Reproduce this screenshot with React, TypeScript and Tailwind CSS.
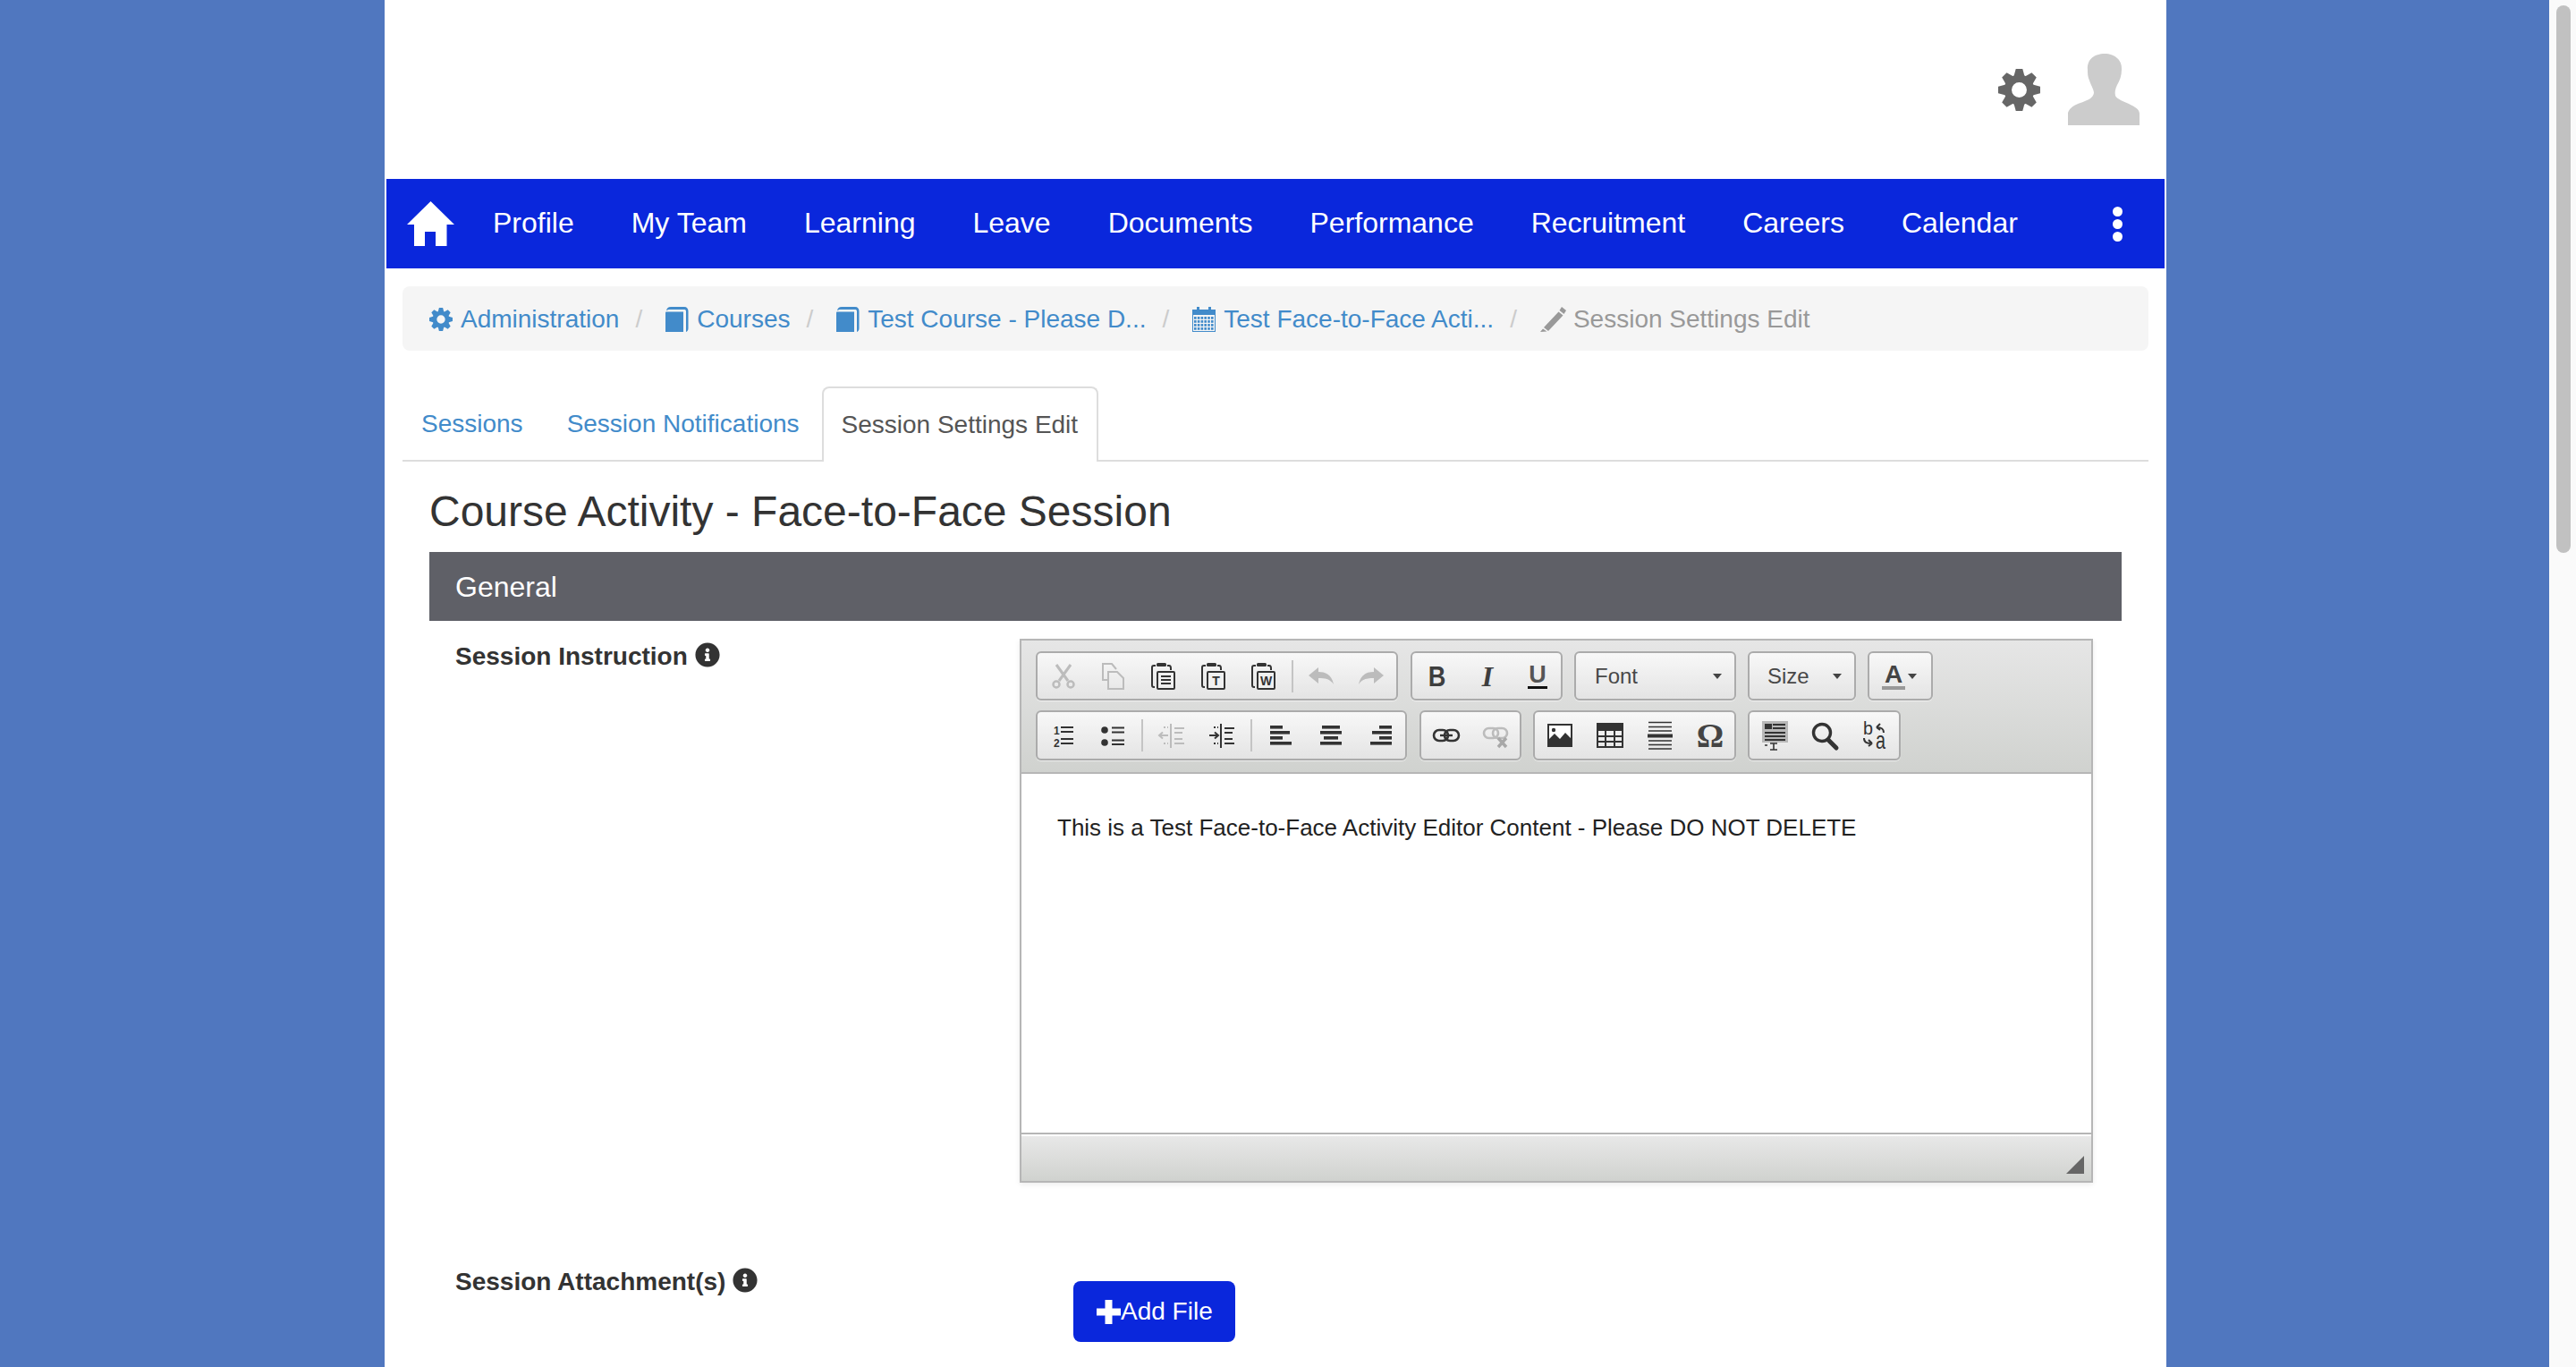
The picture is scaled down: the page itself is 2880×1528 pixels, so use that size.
import type { ReactNode } from 'react';
import { FaInfoCircle } from 'react-icons/fa';

const navItems = ['Profile', 'My Team', 'Learning', 'Leave', 'Documents', 'Performance', 'Recruitment', 'Careers', 'Calendar'];
const gearTeeth = [0, 45, 90, 135, 180, 225, 270, 315];

function GearIcon({ className }: { className: string }) {
    return (
        <svg viewBox="-25 -25 50 50" className={className} fill="currentColor">
            {gearTeeth.map((angle) => (
                <path key={angle} d="M-4 -25H4L7 -14H-7Z" transform={`rotate(${angle})`} />
            ))}
            <path fillRule="evenodd" d="M0 -18A18 18 0 1 1 0 18A18 18 0 1 1 0 -18ZM0 -9A9 9 0 1 0 0 9A9 9 0 1 0 0 -9Z" />
        </svg>
    );
}

function BookIcon() {
    return (
        <svg width="26" height="28" viewBox="0 0 26 28" className="shrink-0 fill-[#428bca]">
            <path d="M0 28V6.5C0 6 .5 5.5 1 5.5H20V28Z" />
            <path d="M1 4.5C1 2 3 0 6 0H21C24 0 25.5 2 25.5 5V24C25.5 26 24.5 27.5 23 28V5C23 3.5 22 3 21 3H5C3 3 1.5 3.5 1 4.5Z" />
        </svg>
    );
}

function CalendarIcon() {
    const cells = [];
    for (let r = 0; r < 4; r++) {
        for (let c = 0; c < 6; c++) {
            cells.push(<rect key={`${r}-${c}`} x={2 + c * 3.8} y={11 + r * 4} width="2.6" height="2.8" />);
        }
    }
    return (
        <svg width="26" height="28" viewBox="0 0 26 28" className="shrink-0 fill-[#428bca]">
            <rect x="5" y="0" width="3" height="5" />
            <rect x="18" y="0" width="3" height="5" />
            <rect x="0" y="3" width="26" height="6" />
            <rect x="0" y="9" width="1" height="19" />
            <rect x="25" y="9" width="1" height="19" />
            <rect x="0" y="27" width="26" height="1" />
            {cells}
        </svg>
    );
}

function PencilIcon() {
    return (
        <svg width="30" height="28" viewBox="0 0 30 28" className="shrink-0 fill-[#999999]">
            <path d="M24 0l5 4-2.5 4-5-4zM20.5 5.5l5 4L9 27l-5-4zM3 24.5l4.5 3L0 28z" />
        </svg>
    );
}

function Crumb({ icon, label }: { icon: ReactNode; label: string }) {
    return (
        <div className="flex items-center gap-[9px]">
            {icon}
            <a className="text-[#428bca]">{label}</a>
        </div>
    );
}

function Slash() {
    return <span className="ml-[18px] mr-[26px] text-[#cccccc]">/</span>;
}

function Icon({ children, gray }: { children: ReactNode; gray?: boolean }) {
    return (
        <svg width="32" height="32" viewBox="0 0 32 32" className={`overflow-visible ${gray ? 'text-[#bcbcbc]' : 'text-[#333333]'}`} fill="none" stroke="currentColor">
            {children}
        </svg>
    );
}

function Paste({ children }: { children: ReactNode }) {
    return (
        <Icon>
            <rect x="8" y="1" width="11" height="4" rx="1.5" fill="currentColor" stroke="none" />
            <path d="M7 4H5C3.5 4 3 5 3 6V26C3 27 3.5 28 5 28H6M20 4H22C23.5 4 24 5 24 7V9" strokeWidth="2" />
            <rect x="9" y="11" width="19" height="19" rx="1" strokeWidth="2" fill="#f0f0f0" />
            {children}
        </Icon>
    );
}

function Btn({ children }: { children: ReactNode }) {
    return <div className="flex h-full w-[56px] shrink-0 items-center justify-center">{children}</div>;
}

function Sep({ className }: { className: string }) {
    return (
        <div className={`flex h-full shrink-0 items-center justify-center ${className}`}>
            <div className="h-[36px] w-[2px] bg-[#c4c4c4]" />
        </div>
    );
}

function Group({ children, className }: { children: ReactNode; className: string }) {
    return (
        <div className={`flex shrink-0 items-center rounded-[6px] border-2 border-[#ababab] bg-linear-to-b from-[#f8f8f8] to-[#e4e4e4] shadow-[0_1px_1px_rgba(255,255,255,0.6)] ${className}`}>
            {children}
        </div>
    );
}

function Caret() {
    return <div className="h-0 w-0 border-x-[5px] border-t-[6px] border-x-transparent border-t-[#444444]" />;
}

function AlignIcon({ rows }: { rows: [number, number][] }) {
    return (
        <Icon>
            {rows.map(([x, w], i) => (
                <rect key={i} x={x} y={5 + i * 6} width={w} height="3.6" fill="currentColor" stroke="none" />
            ))}
        </Icon>
    );
}

function IndentIcon({ gray, right }: { gray?: boolean; right?: boolean }) {
    return (
        <Icon gray={gray}>
            <path d="M15 3V30" strokeWidth="2" />
            <path d="M19 8H30M19 13H28M19 20H28M19 25H30" strokeWidth="2" />
            <path d="M7 7H12M7 25H12" strokeWidth="2" strokeDasharray="2 2" />
            {right ? <path d="M2 16H11M8 12.5L12 16L8 19.5" strokeWidth="2" /> : <path d="M12 16H3M6 12.5L2 16L6 19.5" strokeWidth="2" />}
        </Icon>
    );
}

function Editor() {
    return (
        <div className="flex h-[608px] w-[1200px] flex-col border-2 border-[#b6b6b6] shadow-[0_2px_6px_rgba(0,0,0,0.08)]">
            <div className="flex flex-col gap-[11px] border-b-2 border-[#b6b6b6] bg-linear-to-b from-[#e6e6e6] to-[#d0d2cf] pb-[13px] pl-[16px] pt-[12px]">
                <div className="flex gap-[13px]">
                    <Group className="mr-[1px] h-[55px] w-[405px] pl-[1px]">
                        <Btn>
                            <Icon gray>
                                <path d="M8 3L21 21M24 3L11 21" strokeWidth="3" />
                                <circle cx="8" cy="25" r="3.5" strokeWidth="2.5" />
                                <circle cx="24" cy="25" r="3.5" strokeWidth="2.5" />
                            </Icon>
                        </Btn>
                        <Btn>
                            <Icon gray>
                                <path d="M9 20H4V2H14L19 8" strokeWidth="2" />
                                <path d="M10 11H20L27 18V30H10Z" strokeWidth="2" />
                            </Icon>
                        </Btn>
                        <Btn>
                            <Paste>
                                <path d="M13 16H24M13 20H24M13 24H24" strokeWidth="2" />
                            </Paste>
                        </Btn>
                        <Btn>
                            <Paste>
                                <text x="18.5" y="26" textAnchor="middle" fontSize="14" fontWeight="700" fontFamily="'Liberation Sans', sans-serif" fill="currentColor" stroke="none">T</text>
                            </Paste>
                        </Btn>
                        <Btn>
                            <Paste>
                                <text x="18.5" y="26" textAnchor="middle" fontSize="14" fontWeight="700" fontFamily="'Liberation Sans', sans-serif" fill="currentColor" stroke="none">W</text>
                            </Paste>
                        </Btn>
                        <Sep className="w-[8px]" />
                        <Btn>
                            <Icon gray>
                                <path d="M2 15L13 6V11C21 11 28 14 30 25C26 19 21 18 13 18V24Z" fill="currentColor" stroke="none" />
                            </Icon>
                        </Btn>
                        <Btn>
                            <Icon gray>
                                <path d="M30 15L19 6V11C11 11 4 14 2 25C6 19 11 18 19 18V24Z" fill="currentColor" stroke="none" />
                            </Icon>
                        </Btn>
                    </Group>
                    <Group className="h-[55px] w-[170px]">
                        <Btn><span className="inline-block scale-x-[0.85] font-['Liberation_Sans',sans-serif] text-[32px] font-bold leading-none text-[#3e3e3e]">B</span></Btn>
                        <Btn><span className="font-['Liberation_Serif',serif] text-[32px] font-bold italic leading-none text-[#3e3e3e]">I</span></Btn>
                        <Btn><span className="inline-block border-b-[3px] border-[#111111] px-[1px] font-['Liberation_Sans',sans-serif] text-[27px] font-bold leading-[26px] text-[#555555]">U</span></Btn>
                    </Group>
                    <Group className="h-[55px] w-[181px] justify-between pl-[21px] pr-[14px]">
                        <span className="text-[24px] text-[#484848]">Font</span>
                        <Caret />
                    </Group>
                    <Group className="h-[55px] w-[121px] justify-between pl-[20px] pr-[14px]">
                        <span className="text-[24px] text-[#484848]">Size</span>
                        <Caret />
                    </Group>
                    <Group className="h-[55px] w-[73px] pl-[14px]">
                        <span className="inline-block border-b-[4px] border-[#999999] px-[3px] text-[28px] font-bold leading-[27px] text-[#444444]">A</span>
                        <div className="ml-[3px]"><Caret /></div>
                    </Group>
                </div>
                <div className="flex gap-[13px]">
                    <Group className="mr-[1px] h-[56px] w-[415px]">
                        <Btn>
                            <Icon>
                                <text x="6" y="15" fontSize="12" fontWeight="700" fontFamily="'Liberation Sans', sans-serif" fill="currentColor" stroke="none">1</text>
                                <text x="6" y="29" fontSize="12" fontWeight="700" fontFamily="'Liberation Sans', sans-serif" fill="currentColor" stroke="none">2</text>
                                <path d="M14 7H28M14 12H28M14 20H28M14 25H28" strokeWidth="2" />
                            </Icon>
                        </Btn>
                        <Btn>
                            <Icon>
                                <circle cx="7" cy="10" r="3.8" fill="currentColor" stroke="none" />
                                <circle cx="7" cy="24" r="3.8" fill="currentColor" stroke="none" />
                                <path d="M15 7.5H29M15 12.5H29M15 21.5H29M15 26H29" strokeWidth="2" />
                            </Icon>
                        </Btn>
                        <Sep className="w-[10px]" />
                        <Btn><IndentIcon gray /></Btn>
                        <Btn><IndentIcon right /></Btn>
                        <Sep className="w-[10px]" />
                        <Btn><AlignIcon rows={[[4, 14], [4, 22], [4, 14], [4, 24]]} /></Btn>
                        <Btn><AlignIcon rows={[[6, 20], [4, 24], [8, 16], [4, 24]]} /></Btn>
                        <Btn><AlignIcon rows={[[14, 14], [6, 22], [14, 14], [4, 24]]} /></Btn>
                    </Group>
                    <Group className="h-[56px] w-[114px]">
                        <Btn>
                            <Icon>
                                <rect x="2" y="10" width="16" height="12" rx="6" strokeWidth="2.6" />
                                <rect x="14" y="10" width="16" height="12" rx="6" strokeWidth="2.6" />
                                <path d="M9 16H23" strokeWidth="2.4" />
                            </Icon>
                        </Btn>
                        <Btn>
                            <Icon gray>
                                <rect x="2" y="8" width="16" height="11" rx="5.5" strokeWidth="2.6" />
                                <rect x="12" y="8" width="16" height="11" rx="5.5" strokeWidth="2.6" />
                                <path d="M18 19L27 29M27 19L18 29" strokeWidth="3.4" className="text-[#a8a8a8]" />
                            </Icon>
                        </Btn>
                    </Group>
                    <Group className="h-[56px] w-[227px]">
                        <Btn>
                            <Icon>
                                <rect x="3" y="4" width="26" height="24" strokeWidth="2" fill="#ffffff" />
                                <circle cx="9" cy="10" r="2.2" fill="currentColor" stroke="none" />
                                <path d="M3 28V21L10 14L16 20L22 13L29 20V28Z" fill="currentColor" stroke="none" />
                            </Icon>
                        </Btn>
                        <Btn>
                            <Icon>
                                <rect x="1" y="3" width="30" height="8" fill="currentColor" stroke="none" />
                                <rect x="2" y="3" width="28" height="26" strokeWidth="2" fill="none" />
                                <path d="M11 11V29M21 11V29M2 17H30M2 23H30" strokeWidth="2" />
                            </Icon>
                        </Btn>
                        <Btn>
                            <Icon>
                                <path d="M3 1.5H29M3 6.5H29M3 11H29M3 22H29M3 26.5H29M3 31H29" strokeWidth="1.6" />
                                <rect x="2" y="14.5" width="28" height="4" fill="currentColor" stroke="none" />
                            </Icon>
                        </Btn>
                        <Btn><span className="font-['Liberation_Serif',serif] text-[38px] font-bold leading-none text-[#444444]">Ω</span></Btn>
                    </Group>
                    <Group className="h-[56px] w-[171px]">
                        <Btn>
                            <Icon>
                                <rect x="2" y="0" width="29" height="24" fill="#b8b8b8" stroke="none" />
                                <rect x="5" y="3" width="8" height="6" fill="currentColor" stroke="none" />
                                <path d="M14 4H28M14 8H28M5 13H28M5 17H28M5 21H28" strokeWidth="2" />
                                <path d="M11 25H19M15 25V32M11 32H19M5 27H8" strokeWidth="1.6" />
                            </Icon>
                        </Btn>
                        <Btn>
                            <Icon>
                                <circle cx="13" cy="13" r="9.5" strokeWidth="3.4" />
                                <path d="M20 21L29 30" strokeWidth="5" strokeLinecap="round" />
                            </Icon>
                        </Btn>
                        <Btn>
                            <Icon>
                                <text x="3" y="15" fontSize="20" textLength="11" lengthAdjust="spacingAndGlyphs" fontFamily="'Liberation Sans', sans-serif" fill="currentColor" stroke="none">b</text>
                                <text x="17" y="31" fontSize="28" textLength="11" lengthAdjust="spacingAndGlyphs" fontFamily="'Liberation Sans', sans-serif" fill="currentColor" stroke="none">a</text>
                                <path d="M26 13C26 8 23 7 18 7M18 7L22 3M18 7L22 10" strokeWidth="2" />
                                <path d="M4 19C4 24 7 25 13 25M13 25L9 21M13 25L9 28" strokeWidth="2" />
                            </Icon>
                        </Btn>
                    </Group>
                </div>
            </div>
            <div className="flex-1 bg-white pl-[40px] pt-[45px] text-[26px] leading-[30px] text-[#222222]">
                This is a Test Face-to-Face Activity Editor Content - Please DO NOT DELETE
            </div>
            <div className="border-t-2 border-[#b6b6b6]">
                <div className="flex h-[52px] items-end justify-end border-t-2 border-white bg-linear-to-b from-[#e8e8e8] to-[#d0d2cf] pb-[8px] pr-[8px]">
                    <svg width="20" height="20" viewBox="0 0 20 20" className="fill-[#666666]">
                        <path d="M20 0V20H0Z" />
                    </svg>
                </div>
            </div>
        </div>
    );
}

export default function App() {
    return (
        <div className="flex h-[1528px] overflow-hidden font-['Liberation_Sans',Arial,sans-serif]">
            <div className="flex-1 bg-[#5077bf]">
                <div className="ml-[430px] h-full w-[1992px] bg-white">
                    <div className="flex h-[200px] items-center justify-end gap-[31px] pr-[30px]">
                        <GearIcon className="h-[47px] w-[47px] text-[#666666]" />
                        <svg width="80" height="80" viewBox="0 0 80 80" className="fill-[#cccccc]">
                            <path d="M0 80V66C2 60 8 57 14 55C22 52 28 50 29 44C29 40 26 36 24 30C22 26 22 22 22 18C21 6 30 0 41 0C52 0 61 7 60 18C60 24 58 30 55 35C53 39 52 43 53 47C55 51 62 53 68 56C74 59 80 62 80 67V80Z" />
                        </svg>
                    </div>

                    <nav className="mx-[2px] flex h-[100px] items-center bg-[#0a27dc] pl-[23px] pr-[47px] text-[32px] text-white">
                        <svg width="53" height="50" viewBox="0 0 53 50" className="mr-[43px] shrink-0 fill-white">
                            <path d="M26.5 0L53 26H44.5V50H32V34H20V50H8V26H0Z" />
                        </svg>
                        <div className="mb-[2px] flex gap-[64px]">
                            {navItems.map((item) => (
                                <a key={item}>{item}</a>
                            ))}
                        </div>
                        <div className="ml-auto flex flex-col gap-[3px]">
                            <div className="h-[11px] w-[11px] rounded-full bg-white" />
                            <div className="h-[11px] w-[11px] rounded-full bg-white" />
                            <div className="h-[11px] w-[11px] rounded-full bg-white" />
                        </div>
                    </nav>

                    <div className="mx-[20px] mt-[20px] flex h-[72px] items-center rounded-lg bg-[#f5f5f5] pl-[30px] pt-[1px] text-[28px]">
                        <Crumb icon={<GearIcon className="h-[28px] w-[26px] shrink-0 text-[#428bca]" />} label="Administration" />
                        <Slash />
                        <Crumb icon={<BookIcon />} label="Courses" />
                        <Slash />
                        <Crumb icon={<BookIcon />} label="Test Course - Please D..." />
                        <Slash />
                        <Crumb icon={<CalendarIcon />} label="Test Face-to-Face Acti..." />
                        <Slash />
                        <div className="flex items-center gap-[7px]">
                            <PencilIcon />
                            <span className="text-[#999999]">Session Settings Edit</span>
                        </div>
                    </div>

                    <div className="mx-[20px] mt-[40px] flex h-[84px] items-start border-b-2 border-[#dddddd] text-[28px]">
                        <a className="flex h-[84px] items-center pl-[21px] pr-[25px] text-[#428bca]">Sessions</a>
                        <a className="flex h-[84px] items-center pl-[24px] pr-[25px] text-[#428bca]">Session Notifications</a>
                        <a className="flex h-[84px] items-center rounded-t-lg border-2 border-b-0 border-[#dddddd] bg-white pl-[20px] pr-[21px] text-[#555555]">Session Settings Edit</a>
                    </div>

                    <div className="mx-[50px]">
                        <h1 className="mb-[15px] mt-[26px] flex h-[60px] items-center text-[48px] text-[#333333]">Course Activity - Face-to-Face Session</h1>
                        <div className="flex h-[77px] items-center bg-[#5f6067] pl-[29px] text-[32px] text-white">General</div>

                        <div className="mt-[20px] grid grid-cols-[660px_1fr]">
                            <div className="flex h-[40px] items-center gap-[8px] pl-[29px] text-[28px] font-bold text-[#333333]">
                                Session Instruction
                                <FaInfoCircle className="mb-[4px] h-[28px] w-[28px]" />
                            </div>
                            <Editor />
                        </div>

                        <div className="mt-[90px] grid grid-cols-[660px_1fr]">
                            <div className="flex h-[42px] items-center gap-[8px] pl-[29px] text-[28px] font-bold text-[#333333]">
                                Session Attachment(s)
                                <FaInfoCircle className="mb-[4px] h-[28px] w-[28px]" />
                            </div>
                            <div className="pl-[60px] pt-[20px]">
                                <button className="flex h-[68px] w-[181px] items-center rounded-lg bg-[#0a27dc] pl-[26px] text-[28px] text-white">
                                    <svg width="27" height="27" viewBox="0 0 27 27" className="shrink-0 fill-white">
                                        <path d="M9.5 0H17.5V9.5H27V17.5H17.5V27H9.5V17.5H0V9.5H9.5Z" />
                                    </svg>
                                    Add File
                                </button>
                            </div>
                        </div>
                    </div>
                </div>
            </div>

            <div className="w-[30px] bg-[#fafafa] px-[8px] pt-[6px]">
                <div className="h-[612px] w-[16px] rounded-full bg-[#c1c1c1]" />
            </div>
        </div>
    );
}
